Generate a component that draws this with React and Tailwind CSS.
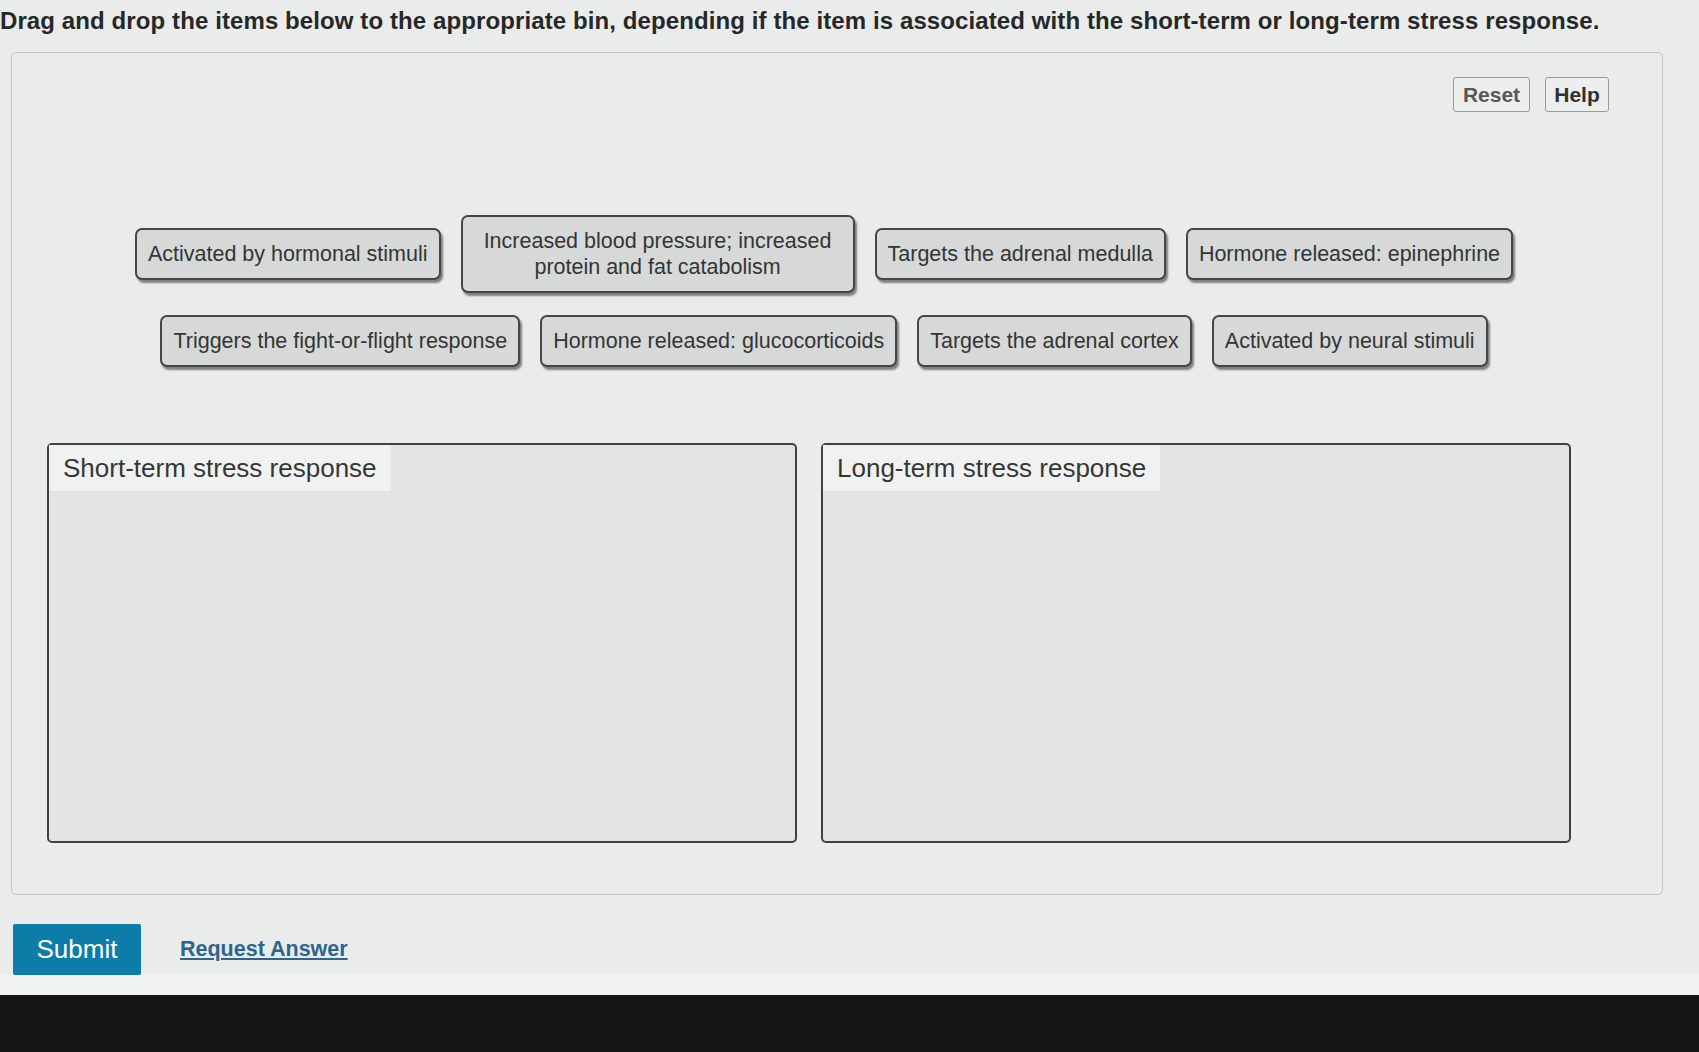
import React, { useState } from 'react';

const ITEMS = [
    'Activated by hormonal stimuli',
    'Increased blood pressure; increased protein and fat catabolism',
    'Targets the adrenal medulla',
    'Hormone released: epinephrine',
    'Triggers the fight-or-flight response',
    'Hormone released: glucocorticoids',
    'Targets the adrenal cortex',
    'Activated by neural stimuli',
];

const BINS = ['Short-term stress response', 'Long-term stress response'];

const Chip = ({ label }) => (
    <div className="max-w-[394px] rounded-[7px] border-2 border-[#444748] bg-[#d7d9d9] px-[11px] py-[11px] text-center text-[21.5px] leading-[26px] text-[#333535] shadow-[2px_3px_2px_rgba(40,40,40,0.55)] cursor-move select-none">
        {label}
    </div>
);

const Bin = ({ title }) => (
    <div className="flex h-[400px] w-[750px] flex-col rounded-[5px] border-2 border-[#3f4243] bg-[#e3e5e5]">
        <div className="self-start bg-[#f0f1f1] px-[14px] py-[8px] text-[26px] leading-[30px] text-[#353737]">
            {title}
        </div>
    </div>
);

export default function App() {
    const [items] = useState(ITEMS);

    return (
        <div className="flex min-h-screen w-full flex-col bg-[#eaebeb] font-['Liberation_Sans',Arial,sans-serif]">
            <h1 className="pt-[6px] text-[24px] font-bold leading-[30px] tracking-[0.1px] text-[#262828]">
                Drag and drop the items below to the appropriate bin, depending if the item is associated with the short-term or long-term stress response.
            </h1>

            {/* activity panel */}
            <div className="ml-[11px] mt-[16px] flex h-[843px] w-[1652px] flex-col rounded-[5px] border border-[#c3c5c5] bg-[#eaebeb]">
                <div className="mr-[53px] mt-[24px] flex justify-end gap-[15px]">
                    <button className="h-[35px] w-[77px] rounded-[3px] border border-[#9a9c9c] bg-[#edeeee] text-[21px] font-bold text-[#575959]">
                        Reset
                    </button>
                    <button className="h-[35px] w-[64px] rounded-[3px] border border-[#9a9c9c] bg-[#edeeee] text-[21px] font-bold text-[#2f3131]">
                        Help
                    </button>
                </div>

                <div className="mt-[103px] flex flex-wrap items-center justify-center gap-x-[20px] gap-y-[22px] pl-[104px] pr-[130px]">
                    {items.map(item => <Chip key={item} label={item} />)}
                </div>

                <div className="ml-[35px] mt-[76px] flex gap-[24px]">
                    {BINS.map(b => <Bin key={b} title={b} />)}
                </div>
            </div>

            <div className="ml-[13px] mt-[29px] flex items-center gap-[39px]">
                <button className="h-[51px] w-[128px] rounded-[2px] bg-[#0d7ca8] text-[26px] text-white">
                    Submit
                </button>
                <a href="#" className="text-[21.5px] font-bold text-[#2b6591] underline underline-offset-2">
                    Request Answer
                </a>
            </div>

            <div className="flex-1 bg-[#f0f1f1]" />
            <div className="h-[57px] bg-[#141516]" />
        </div>
    );
}
